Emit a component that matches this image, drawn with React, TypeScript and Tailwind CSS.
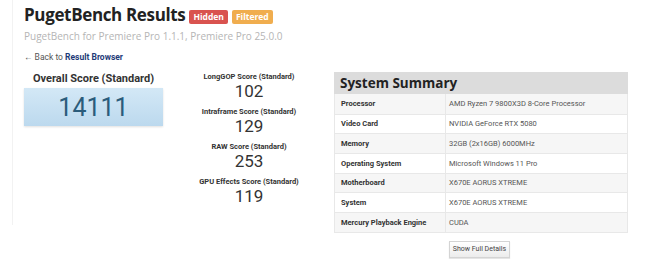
export default function App() {
  const scores = [
    { label: "LongGOP Score (Standard)", value: 102 },
    { label: "Intraframe Score (Standard)", value: 129 },
    { label: "RAW Score (Standard)", value: 253 },
    { label: "GPU Effects Score (Standard)", value: 119 },
  ];

  const specs = [
    ["Processor", "AMD Ryzen 7 9800X3D 8-Core Processor"],
    ["Video Card", "NVIDIA GeForce RTX 5080"],
    ["Memory", "32GB (2x16GB) 6000MHz"],
    ["Operating System", "Microsoft Windows 11 Pro"],
    ["Motherboard", "X670E AORUS XTREME"],
    ["System", "X670E AORUS XTREME"],
    ["Mercury Playback Engine", "CUDA"],
  ];

  return (
    <div className="w-[660px] h-[259px] overflow-hidden bg-white font-['Roboto',sans-serif]">
      <div className="ml-[12px] h-[225px] border-l border-[#f2f2f2] pl-[11px] pt-[3px]">
        {/* HEADER */}
        <div className="flex items-center gap-[4px]">
          <h1 className="font-['Open_Sans',sans-serif] text-[17px] font-bold leading-[24px] tracking-[-0.35px] text-[#222]">
            PugetBench Results
          </h1>
          <span className="mt-[3px] rounded-[2px] bg-[#d9534f] px-[4px] text-[8.5px] font-bold leading-[14px] text-white font-['Open_Sans',sans-serif]">
            Hidden
          </span>
          <span className="mt-[3px] rounded-[2px] bg-[#f0ad4e] px-[4px] text-[8.5px] font-bold leading-[14px] text-white font-['Open_Sans',sans-serif]">
            Filtered
          </span>
        </div>
        <p className="mt-[2px] font-['Open_Sans',sans-serif] text-[10px] leading-[14px] text-[#b5b5b5]">
          PugetBench for Premiere Pro 1.1.1, Premiere Pro 25.0.0
        </p>
        <p className="mt-[8px] text-[8.5px] leading-[12px] text-[#555]">
          ← Back to <span className="font-bold text-[#1e3a78]">Result Browser</span>
        </p>

        <div className="mt-[9px] flex">
          {/* OVERALL */}
          <div className="w-[139px] flex flex-col items-center">
            <p className="text-[11px] font-bold leading-[14px] text-[#333]">
              Overall Score (Standard)
            </p>
            <div className="mt-[2px] flex h-[38px] w-full items-center justify-center bg-gradient-to-b from-[#d3e8f6] to-[#bcd9ee] shadow-[0_1px_2px_rgba(0,0,0,0.12)]">
              <span className="text-[25px] leading-none text-[#2b5c7b]">14111</span>
            </div>
          </div>

          {/* SUB SCORES */}
          <div className="ml-[11px] w-[150px] flex flex-col items-center">
            {scores.map((s) => (
              <div key={s.label} className="flex h-[35px] flex-col items-center">
                <p className="text-[7.5px] font-bold leading-[10px] text-[#333]">{s.label}</p>
                <p className="text-[17px] leading-[19px] text-[#333]">{s.value}</p>
              </div>
            ))}
          </div>

          {/* SYSTEM SUMMARY */}
          <div className="ml-[10px] w-[294px]">
            <div className="bg-[#dcdcdc] px-[6px] h-[22px] flex items-center">
              <h2 className="font-['Open_Sans',sans-serif] text-[13.5px] font-bold text-[#222]">
                System Summary
              </h2>
            </div>
            <div className="border-x border-b border-[#e8e8e8]">
              {specs.map(([k, v], i) => (
                <div
                  key={k}
                  className={`flex h-[19.7px] items-center border-t border-[#e8e8e8] first:border-t-0 text-[7.5px] ${
                    i % 2 === 0 ? "bg-[#f6f6f6]" : "bg-white"
                  }`}
                >
                  <div className="w-[111px] self-stretch flex items-center border-r border-[#e8e8e8] pl-[6px] font-bold text-[#333]">
                    {k}
                  </div>
                  <div className="pl-[3px] text-[#555]">{v}</div>
                </div>
              ))}
            </div>
          </div>
        </div>
      </div>

      <div className="flex justify-end pr-[150px] mt-[16px]">
        <button className="h-[17px] border border-[#d4d4d4] bg-gradient-to-b from-white to-[#ececec] px-[3px] text-[7px] text-[#444] shadow-[0_1px_1px_rgba(0,0,0,0.1)]">
          Show Full Details
        </button>
      </div>
    </div>
  );
}
